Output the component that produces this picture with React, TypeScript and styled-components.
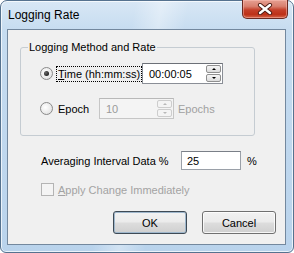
import React from 'react';
import styled, { createGlobalStyle } from 'styled-components';

const Global = createGlobalStyle`
  html, body { margin: 0; padding: 0; background: #ffffff; }
  body { font-family: "Liberation Sans", Arial, sans-serif; font-size: 11px; color: #000; }
`;

const Window = styled.div`
  box-sizing: border-box;
  width: 294px;
  height: 253px;
  display: flex;
  flex-direction: column;
  border: 1px solid #55728f;
  border-radius: 7px 7px 6px 6px;
  padding: 0 7px 7px 6px;
  background:
    linear-gradient(100deg, rgba(255,255,255,0) 40%, rgba(255,255,255,0.35) 48%, rgba(255,255,255,0) 56%),
    linear-gradient(180deg, #d8e7f5 0%, #c6dcf0 30px, #b9d3ec 100%);
  box-shadow: inset 0 0 0 1px rgba(255, 255, 255, 0.7);
`;

const TitleBar = styled.div`
  display: flex;
  align-items: flex-start;
  height: 28px;
  flex: none;
`;

const Title = styled.div`
  font-size: 12px;
  line-height: 14px;
  padding: 7px 0 0 1px;
  color: #000;
`;

const CloseButton = styled.div`
  margin: -1px -2px 0 auto;
  width: 46px;
  height: 19px;
  box-sizing: border-box;
  border: 1px solid #6a2a22;
  border-top: none;
  border-radius: 0 0 5px 5px;
  display: flex;
  align-items: center;
  justify-content: center;
  background: linear-gradient(180deg, #e6a092 0%, #d9806f 35%, #c5402a 55%, #bd3118 80%, #d4654a 100%);
  box-shadow: inset 0 0 0 1px rgba(255, 200, 190, 0.45);
`;

const Client = styled.div`
  flex: 1;
  display: flex;
  flex-direction: column;
  border: 1px solid #73889e;
  background: #f0f0f0;
`;

const Group = styled.fieldset`
  box-sizing: border-box;
  width: 235px;
  margin: 10px 0 0 12px;
  padding: 9px 0 16px 19px;
  border: 1px solid #c5ccd2;
  border-radius: 3px;
  display: flex;
  flex-direction: column;
  gap: 14px;
  min-width: 0;
`;

const Legend = styled.legend`
  line-height: 14px;
  padding: 0 1px;
  margin-left: -12px;
`;

const Row = styled.div`
  display: flex;
  align-items: center;
  height: 21px;
`;

const Radio = styled.span<{ $checked?: boolean }>`
  box-sizing: border-box;
  width: 13px;
  height: 13px;
  border-radius: 50%;
  border: 1px solid #8a8a8a;
  background: radial-gradient(circle at 40% 40%, #ffffff 0%, #e6e6e6 70%, #d0d0d0 100%);
  display: flex;
  align-items: center;
  justify-content: center;
  flex: none;
  &::after {
    content: '';
    display: ${(p) => (p.$checked ? 'block' : 'none')};
    width: 5px;
    height: 5px;
    border-radius: 50%;
    background: radial-gradient(circle at 35% 35%, #6a6a6a 0%, #1a1a1a 80%);
  }
`;

const OptionLabel = styled.span<{ $w: number }>`
  width: ${(p) => p.$w}px;
  flex: none;
  padding-left: 5px;
  box-sizing: border-box;
  display: flex;
`;

const LabelText = styled.span<{ $focus?: boolean }>`
  line-height: 14px;
  padding: 0 1px;
  margin-left: -1px;
  outline: ${(p) => (p.$focus ? '1px dotted #000' : 'none')};
  outline-offset: 0;
  white-space: nowrap;
`;

const U = styled.span`
  text-decoration: underline;
`;

const SpinBox = styled.div<{ $w: number; $disabled?: boolean }>`
  box-sizing: border-box;
  width: ${(p) => p.$w}px;
  height: 21px;
  display: flex;
  border: 1px solid ${(p) => (p.$disabled ? '#c6c6c6' : '#8a8e96')};
  border-top-color: ${(p) => (p.$disabled ? '#b8b8b8' : '#6c7077')};
  background: ${(p) => (p.$disabled ? '#f4f4f4' : '#ffffff')};
  padding: 1px 1px 1px 0;
`;

const Field = styled.div<{ $disabled?: boolean }>`
  flex: 1;
  display: flex;
  align-items: center;
  padding-left: 6px;
  color: ${(p) => (p.$disabled ? '#9a9a9a' : '#000')};
`;

const Spinner = styled.div`
  width: 15px;
  display: flex;
  flex-direction: column;
  gap: 1px;
`;

const SpinButton = styled.div<{ $disabled?: boolean }>`
  flex: 1;
  box-sizing: border-box;
  border: 1px solid ${(p) => (p.$disabled ? '#cdcdcd' : '#8f8f8f')};
  border-radius: 2px;
  background: ${(p) =>
    p.$disabled ? '#f4f4f4' : 'linear-gradient(180deg, #f6f6f6 0%, #e9e9e9 50%, #dcdcdc 100%)'};
  display: flex;
  align-items: center;
  justify-content: center;
`;

const Arrow = styled.span<{ $down?: boolean; $disabled?: boolean }>`
  width: 0;
  height: 0;
  border-left: 2px solid transparent;
  border-right: 2px solid transparent;
  ${(p) =>
    p.$down
      ? `border-top: 2px solid ${p.$disabled ? '#b8b8b8' : '#000'};`
      : `border-bottom: 2px solid ${p.$disabled ? '#b8b8b8' : '#000'};`}
`;

const Suffix = styled.span<{ $disabled?: boolean; $gap: number }>`
  margin-left: ${(p) => p.$gap}px;
  color: ${(p) => (p.$disabled ? '#a0a0a0' : '#000')};
`;

const PlainRow = styled.div<{ $top: number; $h: number }>`
  display: flex;
  align-items: center;
  margin: ${(p) => p.$top}px 0 0 33px;
  height: ${(p) => p.$h}px;
`;

const FieldLabel = styled.span`
  width: 140px;
  flex: none;
`;

const TextBox = styled.div`
  box-sizing: border-box;
  width: 60px;
  height: 19px;
  border: 1px solid #9aa0a8;
  border-top-color: #7a7f87;
  background: #fff;
  display: flex;
  align-items: center;
  padding-left: 5px;
`;

const CheckBox = styled.span`
  box-sizing: border-box;
  width: 13px;
  height: 13px;
  border: 1px solid #b4b4b4;
  background: #f4f4f4;
  flex: none;
`;

const CheckLabel = styled.span`
  margin-left: 4px;
  color: #a3a3a3;
`;

const Buttons = styled.div`
  margin-top: auto;
  display: flex;
  justify-content: flex-end;
  gap: 15px;
  padding: 0 9px 10px 0;
`;

const Button = styled.div<{ $default?: boolean }>`
  box-sizing: border-box;
  width: 74px;
  height: 23px;
  border: 1px solid ${(p) => (p.$default ? '#3e4a55' : '#707070')};
  border-radius: 3px;
  background: linear-gradient(180deg, #f2f2f2 0%, #ebebeb 48%, #dddddd 52%, #cfcfcf 100%);
  box-shadow: inset 0 0 0 1px ${(p) => (p.$default ? '#9fb7cc' : 'rgba(255,255,255,0.8)')};
  display: flex;
  align-items: center;
  justify-content: center;
`;

function Spin({ value, width, disabled }: { value: string; width: number; disabled?: boolean }) {
  return (
    <SpinBox $w={width} $disabled={disabled}>
      <Field $disabled={disabled}>{value}</Field>
      <Spinner>
        <SpinButton $disabled={disabled}>
          <Arrow $disabled={disabled} />
        </SpinButton>
        <SpinButton $disabled={disabled}>
          <Arrow $down $disabled={disabled} />
        </SpinButton>
      </Spinner>
    </SpinBox>
  );
}

export default function App() {
  return (
    <>
      <Global />
      <Window>
        <TitleBar>
          <Title>Logging Rate</Title>
          <CloseButton>
            <svg width="16" height="12" viewBox="0 0 16 12">
              <path d="M3 2 L13 10 M13 2 L3 10" stroke="#4a1a12" strokeWidth="4.2" strokeLinecap="round" />
              <path d="M3 2 L13 10 M13 2 L3 10" stroke="#ffffff" strokeWidth="2.4" strokeLinecap="round" />
            </svg>
          </CloseButton>
        </TitleBar>
        <Client>
          <Group>
            <Legend>Logging Method and Rate</Legend>
            <Row>
              <Radio $checked />
              <OptionLabel $w={89}>
                <LabelText $focus>
                  <U>T</U>ime (hh:mm:ss)
                </LabelText>
              </OptionLabel>
              <Spin value="00:00:05" width={81} />
            </Row>
            <Row>
              <Radio />
              <OptionLabel $w={46}>
                <LabelText>Epoch</LabelText>
              </OptionLabel>
              <Spin value="10" width={75} disabled />
              <Suffix $disabled $gap={4}>Epochs</Suffix>
            </Row>
          </Group>
          <PlainRow $top={15} $h={19}>
            <FieldLabel>Averaging Interval Data %</FieldLabel>
            <TextBox>25</TextBox>
            <Suffix $gap={6}>%</Suffix>
          </PlainRow>
          <PlainRow $top={13} $h={13}>
            <CheckBox />
            <CheckLabel>
              <U>A</U>pply Change Immediately
            </CheckLabel>
          </PlainRow>
          <Buttons>
            <Button $default>OK</Button>
            <Button>Cancel</Button>
          </Buttons>
        </Client>
      </Window>
    </>
  );
}
